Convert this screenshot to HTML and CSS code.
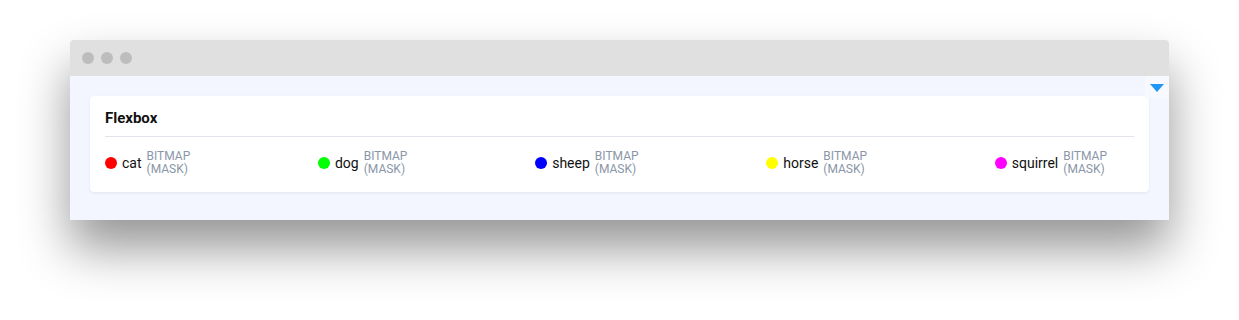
FILE: index.html
```html
<!doctype html>
<html lang="en">
  <head>
    <meta charset="UTF-8" />
    <meta name="viewport" content="width=device-width, initial-scale=1.0" />
    <link rel="stylesheet" href="styles.css">
    <title>Flexbox</title>
  </head>
  <body>
    <div class="window">
      <div class="titlebar">
        <span class="dot"></span>
        <span class="dot"></span>
        <span class="dot"></span>
      </div>
      <div class="content">
        <div class="toggle"><span class="arrow"></span></div>
        <div class="card">
          <h3 class="card-title">Flexbox</h3>
          <div class="legend">
            <div class="item">
              <span class="swatch red"></span>
              <span class="name">cat</span>
              <span class="type">BITMAP<br>(MASK)</span>
            </div>
            <div class="item">
              <span class="swatch green"></span>
              <span class="name">dog</span>
              <span class="type">BITMAP<br>(MASK)</span>
            </div>
            <div class="item">
              <span class="swatch blue"></span>
              <span class="name">sheep</span>
              <span class="type">BITMAP<br>(MASK)</span>
            </div>
            <div class="item">
              <span class="swatch yellow"></span>
              <span class="name">horse</span>
              <span class="type">BITMAP<br>(MASK)</span>
            </div>
            <div class="item">
              <span class="swatch magenta"></span>
              <span class="name">squirrel</span>
              <span class="type">BITMAP<br>(MASK)</span>
            </div>
          </div>
        </div>
      </div>
    </div>
  </body>
</html>
```

FILE: styles.css
```css
html {
  height: 100%;
}

body {
  margin: 0;
  min-height: 100%;
  box-sizing: border-box;
  padding: 40px 70px;
  background: #fff;
  font-family: Roboto, "Liberation Sans", sans-serif;
}

.window {
  border-radius: 4px 4px 0 0;
  box-shadow: 0 28px 50px rgba(0, 0, 0, 0.42);
}

.titlebar {
  display: flex;
  align-items: center;
  gap: 7px;
  height: 36px;
  padding: 0 0 0 12px;
  background: #e0e0e0;
  border-radius: 4px 4px 0 0;
}

.dot {
  width: 12px;
  height: 12px;
  border-radius: 50%;
  background: #bdbdbd;
}

.content {
  position: relative;
  padding: 20px 20px 28px;
  background: #f3f6fe;
}

/* collapse toggle in the corner */
.toggle {
  position: absolute;
  top: 0;
  right: 0;
  width: 24px;
  height: 23px;
  background: #f8f9fe;
  display: flex;
  justify-content: center;
  align-items: center;
}

.arrow {
  width: 0;
  height: 0;
  border-left: 7px solid transparent;
  border-right: 7px solid transparent;
  border-top: 8px solid #2196f3;
  margin-top: 1px;
}

.card {
  background: #fff;
  border-radius: 4px;
  padding: 14px 15px 16px;
  box-shadow: 0 1px 3px rgba(20, 40, 90, 0.08);
}

.card-title {
  margin: 0;
  padding-bottom: 9px;
  font-size: 15px;
  font-weight: 700;
  line-height: 17px;
  color: #111;
  border-bottom: 1px solid #e1e4ea;
}

.legend {
  display: flex;
  justify-content: space-between;
  padding-top: 13px;
}

.item {
  display: flex;
  align-items: center;
  margin-right: 27px;
}

.swatch {
  width: 12px;
  height: 12px;
  border-radius: 50%;
  margin-right: 5px;
}

.red { background: #ff0000; }
.green { background: #00ff00; }
.blue { background: #0000ff; }
.yellow { background: #ffff00; }
.magenta { background: #ff00ff; }

.name {
  font-size: 14px;
  color: #111;
  margin-right: 5px;
}

.type {
  font-size: 12px;
  line-height: 13px;
  color: #8a96a8;
}
```
